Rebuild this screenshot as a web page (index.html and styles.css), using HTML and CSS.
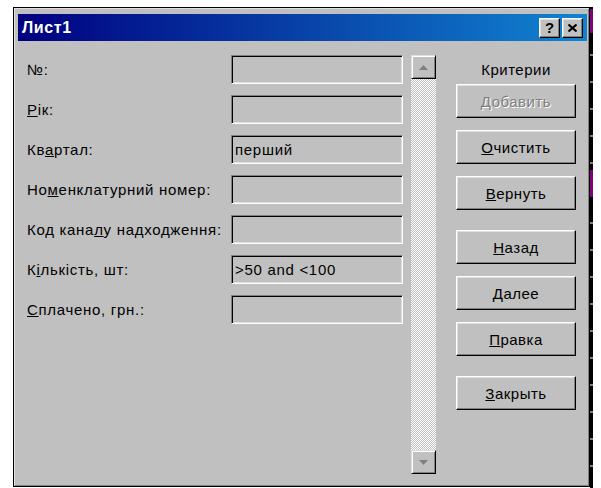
FILE: index.html
```html
<!DOCTYPE html>
<html lang="uk">
<head>
<meta charset="utf-8">
<title>Лист1</title>
<link rel="stylesheet" href="styles.css">
</head>
<body>
<div class="screen">
  <div class="dialog">
    <div class="titlebar">
      <span class="title">Лист1</span>
      <div class="caption-btns">
        <button class="cap-btn help" type="button">?</button>
        <button class="cap-btn close" type="button" aria-label="Закрыть">
          <svg width="9" height="8" viewBox="0 0 9 8"><path d="M0.5 0.5 L8.5 7.5 M8.5 0.5 L0.5 7.5" stroke="#000" stroke-width="2" fill="none"/></svg>
        </button>
      </div>
    </div>

    <div class="content">
      <div class="fields">
        <span class="lbl">№:</span><div class="field"></div>
        <span class="lbl"><u>Р</u>ік:</span><div class="field"></div>
        <span class="lbl">Кв<u>а</u>ртал:</span><div class="field">перший</div>
        <span class="lbl">Но<u>м</u>енклатурний номер:</span><div class="field"></div>
        <span class="lbl">Код кана<u>л</u>у надходження:</span><div class="field"></div>
        <span class="lbl">К<u>і</u>лькість, шт:</span><div class="field">&gt;50 and &lt;100</div>
        <span class="lbl"><u>С</u>плачено, грн.:</span><div class="field"></div>
      </div>

      <div class="scrollbar">
        <div class="sb-btn">
          <svg width="9" height="5" viewBox="0 0 9 5"><path d="M4.5 0 L9 5 L0 5 Z" fill="#808080"/></svg>
        </div>
        <div class="sb-track"></div>
        <div class="sb-btn">
          <svg width="9" height="5" viewBox="0 0 9 5"><path d="M0 0 L9 0 L4.5 5 Z" fill="#808080"/></svg>
        </div>
      </div>

      <div class="side">
        <div class="mode">Критерии</div>
        <button class="btn" type="button" disabled>Добавить</button>
        <button class="btn" type="button"><u>О</u>чистить</button>
        <button class="btn" type="button"><u>В</u>ернуть</button>
        <button class="btn sep" type="button"><u>Н</u>азад</button>
        <button class="btn" type="button"><u>Д</u>алее</button>
        <button class="btn" type="button"><u>П</u>равка</button>
        <button class="btn sep" type="button"><u>З</u>акрыть</button>
      </div>
    </div>
  </div>

  <div class="sheet-edge">
    <div class="seg dark short"></div>
    <div class="seg purple top"></div>
    <div class="seg ruled mid"></div>
    <div class="seg purple low"></div>
    <div class="seg ruled rest"></div>
  </div>
</div>
</body>
</html>
```

FILE: styles.css
```css
html, body {
  margin: 0;
  background: #fff;
}

body {
  font-family: "Liberation Sans", Arial, sans-serif;
  font-size: 15px;
  color: #000;
}

.screen {
  display: flex;
  height: 488px;
  box-sizing: border-box;
  padding: 7px 0 0 13px;
}

/* Window frame */
.dialog {
  width: 577px;
  height: 480px;
  box-sizing: border-box;
  background: #c0c0c0;
  border: 1px solid #000;
  box-shadow: inset 1px 1px #dfdfdf, inset -1px -1px #808080;
  padding: 6px 2px 0 4px;
  display: flex;
  flex-direction: column;
}

.titlebar {
  height: 27px;
  flex: none;
  display: flex;
  align-items: center;
  justify-content: space-between;
  background: linear-gradient(to right, #000080, #1084d0);
  padding: 0 4px 0 4px;
}

.title {
  color: #fff;
  font-weight: bold;
  font-size: 16px;
  letter-spacing: 0.6px;
}

.caption-btns {
  display: flex;
  gap: 2px;
}

.cap-btn {
  width: 21px;
  height: 20px;
  padding: 0;
  margin: 0;
  background: #c0c0c0;
  border: 1px solid;
  border-color: #fff #000 #000 #fff;
  box-shadow: inset -1px -1px #808080, inset 1px 1px #dfdfdf;
  display: flex;
  align-items: center;
  justify-content: center;
  font-family: "Liberation Sans", Arial, sans-serif;
  font-weight: bold;
  font-size: 15px;
  line-height: 1;
  color: #000;
}

/* Form body */
.content {
  display: flex;
  margin-top: 14px;
  padding-left: 9px;
}

.fields {
  display: grid;
  grid-template-columns: 204px 172px;
  grid-auto-rows: 29px;
  row-gap: 11px;
  align-items: center;
  align-self: flex-start;
}

.lbl {
  white-space: nowrap;
  letter-spacing: 0.7px;
}

.field {
  height: 29px;
  box-sizing: border-box;
  border: 1px solid;
  border-color: #808080 #fff #fff #808080;
  box-shadow: inset 1px 1px #000, inset -1px -1px #dfdfdf;
  padding: 0 3px;
  display: flex;
  align-items: center;
  white-space: nowrap;
  letter-spacing: 0.7px;
}

/* Record scrollbar */
.scrollbar {
  width: 25px;
  height: 419px;
  margin-left: 8px;
  display: flex;
  flex-direction: column;
}

.sb-btn {
  height: 24px;
  flex: none;
  box-sizing: border-box;
  background: #c0c0c0;
  border: 1px solid;
  border-color: #dfdfdf #000 #000 #dfdfdf;
  box-shadow: inset 1px 1px #fff, inset -1px -1px #808080;
  display: flex;
  align-items: center;
  justify-content: center;
}

.sb-track {
  flex: 1;
  background: repeating-conic-gradient(#c0c0c0 0 25%, #fff 0 50%) 0 0 / 2px 2px;
}

/* Command buttons */
.side {
  width: 120px;
  margin-left: 20px;
  display: flex;
  flex-direction: column;
}

.mode {
  height: 29px;
  display: flex;
  align-items: center;
  justify-content: center;
  letter-spacing: 0.5px;
}

.btn {
  height: 34px;
  margin: 0;
  padding: 0;
  background: #c0c0c0;
  border: 1px solid;
  border-color: #fff #000 #000 #fff;
  box-shadow: inset -1px -1px #808080, inset 1px 1px #dfdfdf;
  font-family: "Liberation Sans", Arial, sans-serif;
  font-size: 15px;
  font-weight: normal;
  letter-spacing: 0.5px;
  color: #000;
}

.btn + .btn {
  margin-top: 12px;
}

.btn.sep {
  margin-top: 20px;
}

.btn:disabled {
  color: #808080;
  text-shadow: 1px 1px #fff;
}

/* Worksheet visible beside the window */
.sheet-edge {
  width: 3px;
  display: flex;
  flex-direction: column;
}

.seg {
  flex: none;
}

.seg.dark.short {
  height: 2px;
  background: #000;
}

.seg.purple {
  background: #800080;
}

.seg.purple.top {
  height: 24px;
}

.seg.purple.low {
  height: 27px;
}

.seg.ruled {
  background: repeating-linear-gradient(to bottom, #000 0 25px, #808080 25px 27px);
}

.seg.ruled.mid {
  height: 137px;
  background-position: 0 -4px;
}

.seg.ruled.rest {
  flex: 1;
}
```
